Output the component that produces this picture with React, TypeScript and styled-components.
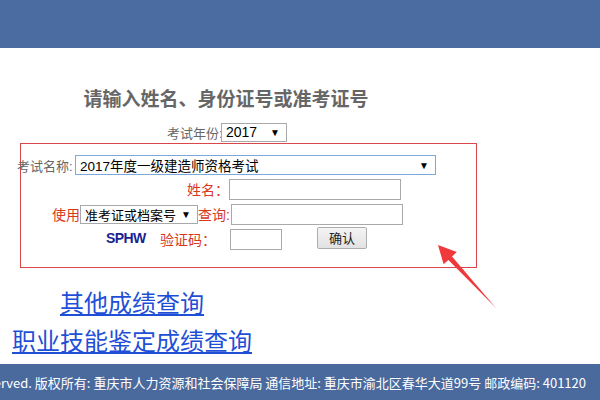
import styled, { createGlobalStyle } from 'styled-components'

const GlobalStyle = createGlobalStyle`
  html, body {
    margin: 0;
    padding: 0;
    background: #fff;
  }
  body {
    font-family: "Liberation Sans", "Noto Sans CJK SC", sans-serif;
    overflow: hidden;
  }
`

const Page = styled.div`
  position: relative;
  width: 600px;
  height: 400px;
  overflow: hidden;
`
const Header = styled.header`
  height: 48px;
  background: #4b6ca1;
`
const Content = styled.main`
  width: 458px;
  padding-left: 20px;
`
const Title = styled.h2`
  margin: 38px 0 0 -20px;
  width: 452px;
  text-align: center;
  font-family: "Noto Sans CJK SC", sans-serif;
  font-size: 19px;
  line-height: 24px;
  font-weight: bold;
  color: #666;
`
const YearRow = styled.div`
  display: flex;
  align-items: center;
  margin: 12px 0 1px 147px;
  height: 20px;
  font-size: 13px;
  color: #666;
`
const FormBox = styled.div`
  box-sizing: border-box;
  width: 457px;
  height: 125px;
  border: 1px solid #d9474a;
  padding: 11px 0 0 0;
  display: flex;
  flex-direction: column;
`
const Row = styled.div<{ $indent: number; $gap: number }>`
  display: flex;
  align-items: center;
  margin-left: ${p => p.$indent}px;
  margin-bottom: ${p => p.$gap}px;
  height: 20px;
`
const Label = styled.span<{ $w: number; $right?: boolean; $red?: boolean; $size?: number }>`
  display: inline-block;
  width: ${p => p.$w}px;
  flex-shrink: 0;
  text-align: ${p => (p.$right ? 'right' : 'left')};
  font-size: ${p => p.$size ?? 14}px;
  color: ${p => (p.$red ? '#d9381e' : '#666')};
  white-space: nowrap;
`
const Select = styled.div<{ $w: number; $focus?: boolean; $size?: number }>`
  box-sizing: border-box;
  width: ${p => p.$w}px;
  height: ${p => (p.$focus ? 20 : 19)}px;
  flex-shrink: 0;
  display: flex;
  align-items: center;
  justify-content: space-between;
  padding: 0 6px 0 4px;
  background: #fff;
  border: 1px solid ${p => (p.$focus ? '#7ea7dc' : '#a9a9a9')};
  font-size: ${p => p.$size ?? 14}px;
  color: #000;
  white-space: nowrap;
`
const Caret = styled.span`
  font-size: 10px;
  color: #000;
`
const Input = styled.div<{ $w: number; $ml?: number }>`
  box-sizing: border-box;
  width: ${p => p.$w}px;
  height: 21px;
  margin-left: ${p => p.$ml ?? 0}px;
  border: 1px solid #a9a9a9;
  background: #fff;
  flex-shrink: 0;
`
const Captcha = styled.span`
  display: inline-block;
  width: 54px;
  font-family: "Liberation Sans", sans-serif;
  font-weight: bold;
  font-size: 14px;
  color: #1b1f8f;
  letter-spacing: -0.6px;
  margin-top: -2px;
`
const Button = styled.button`
  box-sizing: border-box;
  width: 50px;
  height: 22px;
  margin-left: 35px;
  margin-top: -3px;
  padding: 0;
  border: 1px solid #adadad;
  border-radius: 2px;
  background: linear-gradient(#f4f4f4, #e2e2e2);
  font-family: "Noto Sans CJK SC", sans-serif;
  font-size: 13px;
  color: #222;
`
const Links = styled.nav`
  width: 264px;
  margin-top: 15px;
  display: flex;
  flex-direction: column;
  align-items: center;
`
const Link = styled.a`
  font-family: "Noto Sans CJK SC", sans-serif;
  font-size: 24px;
  line-height: 38px;
  color: #1f4fd6;
  text-decoration: underline;
  text-underline-offset: 2px;
  text-decoration-thickness: 2px;
`
const Footer = styled.footer`
  position: absolute;
  left: 0;
  right: 0;
  bottom: 0;
  height: 36px;
  background: #4a6a9e;
  display: flex;
  align-items: center;
  justify-content: flex-end;
  padding-right: 14px;
  overflow: hidden;
  white-space: nowrap;
  font-family: "Noto Sans CJK SC", sans-serif;
  font-size: 13px;
  color: #fff;
`
const Arrow = styled.svg`
  position: absolute;
  left: 430px;
  top: 238px;
  pointer-events: none;
`

export default function App() {
  return (
    <Page>
      <GlobalStyle />
      <Header />
      <Content>
        <Title>请输入姓名、身份证号或准考证号</Title>
        <YearRow>
          <Label $w={54} $size={13}>考试年份:</Label>
          <Select $w={66} $size={14}>
            2017 <Caret>▼</Caret>
          </Select>
        </YearRow>
        <FormBox>
          <Row $indent={-4} $gap={4}>
            <Label $w={58} $size={13}>考试名称:</Label>
            <Select $w={361} $focus $size={13.5}>
              2017年度一级建造师资格考试 <Caret>▼</Caret>
            </Select>
          </Row>
          <Row $indent={0} $gap={5}>
            <Label $w={208} $right $red>姓名：</Label>
            <Input $w={172} />
          </Row>
          <Row $indent={0} $gap={5}>
            <Label $w={59} $right $red>使用</Label>
            <Select $w={118} $size={13}>
              准考证或档案号 <Caret>▼</Caret>
            </Select>
            <Label $w={31} $right $red>查询:</Label>
            <Input $w={172} $ml={2} />
          </Row>
          <Row $indent={85} $gap={0}>
            <Captcha>SPHW</Captcha>
            <Label $w={70} $red>验证码：</Label>
            <Input $w={52} />
            <Button>确认</Button>
          </Row>
        </FormBox>
      </Content>
      <Links>
        <Link href="#">其他成绩查询</Link>
        <Link href="#">职业技能鉴定成绩查询</Link>
      </Links>
      <Footer>
        Copyright © 2017 All Rights Reserved. 版权所有: 重庆市人力资源和社会保障局 通信地址: 重庆市渝北区春华大道99号 邮政编码: 401120
      </Footer>
      <Arrow width="72" height="76" viewBox="430 238 72 76">
        <polygon
          points="438,245 456.8,252.1 452,256.5 496,308 448.4,259.9 443.6,264.3"
          fill="#f0393b"
        />
      </Arrow>
    </Page>
  )
}
